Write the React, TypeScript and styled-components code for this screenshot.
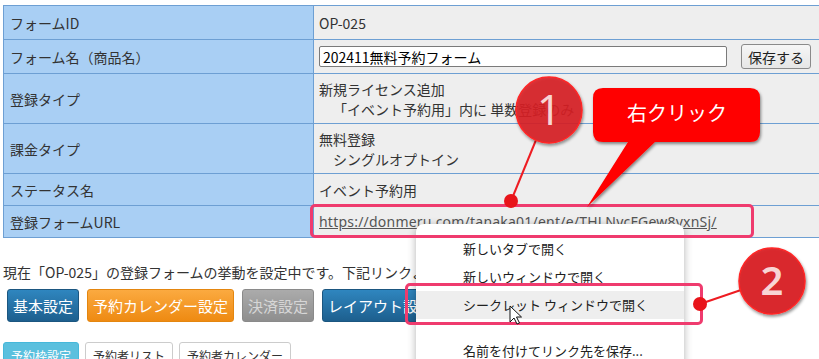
import React from "react";
import styled, { createGlobalStyle, css } from "styled-components";

const GlobalStyle = createGlobalStyle`
  html, body {
    margin: 0;
    padding: 0;
    background: #ffffff;
    overflow: hidden;
  }
  body {
    font-family: "Noto Sans CJK JP", "Noto Sans", sans-serif;
    color: #333333;
  }
`;

const Page = styled.div`
  position: relative;
  width: 819px;
  height: 359px;
  overflow: hidden;
  padding: 5px 0 0 3px;
  box-sizing: border-box;
`;

const FormTable = styled.table`
  border-collapse: collapse;
  width: 840px;
  font-size: 14px;
  line-height: 20px;
`;

const LabelCell = styled.th`
  width: 303px;
  background: #a9cff4;
  border: 1px solid #6d9fd3;
  padding: 0 0 0 6px;
  text-align: left;
  font-weight: normal;
  color: #333;
  vertical-align: middle;
`;

const DataCell = styled.td<{ $h: number }>`
  height: ${(p) => p.$h}px;
  background: #eeeeee;
  border: 1px solid #6d9fd3;
  padding: 0 0 0 5px;
  color: #333;
  vertical-align: middle;
  box-sizing: border-box;
`;

const Indented = styled.div`
  padding-left: 14px;
`;

const NameRow = styled.div`
  display: flex;
  align-items: center;
  gap: 14px;
`;

const NameInput = styled.input`
  width: 408px;
  height: 21px;
  box-sizing: border-box;
  border: 1px solid #7a7a7a;
  border-radius: 2px;
  padding: 0 3px;
  font-family: "Noto Sans CJK JP", sans-serif;
  font-size: 14px;
  color: #000;
  background: #fff;
`;

const SaveButton = styled.button`
  height: 25px;
  width: 70px;
  box-sizing: border-box;
  border: 1px solid #8a8a8a;
  border-radius: 3px;
  background: linear-gradient(#f6f6f6, #e6e6e6);
  font-family: "Noto Sans CJK JP", sans-serif;
  font-size: 14px;
  color: #222;
  padding: 0;
`;

const UrlLink = styled.a`
  color: #555;
  text-decoration: underline;
  font-family: "Noto Sans", "Noto Sans CJK JP", sans-serif;
  font-size: 14px;
  letter-spacing: 0.22px;
`;

const Notice = styled.p`
  margin: 24px 0 7px 0;
  font-size: 14px;
  line-height: 20px;
  color: #333;
  white-space: nowrap;
`;

const ButtonRow = styled.div`
  display: flex;
  gap: 8px;
  padding-left: 4px;
`;

type Variant = "blue" | "orange" | "gray";

const variants: Record<Variant, ReturnType<typeof css>> = {
  blue: css`
    background: linear-gradient(#2f86bf, #1d5f8e);
    border-color: #1b5680;
    color: #fff;
  `,
  orange: css`
    background: linear-gradient(#fbaa40, #ee8a12);
    border-color: #e4860f;
    color: #fff;
  `,
  gray: css`
    background: linear-gradient(#ababab, #8e8e8e);
    border-color: #8a8a8a;
    color: #d6d6d6;
  `,
};

const NavButton = styled.button<{ $variant: Variant }>`
  height: 33px;
  padding: 0 5px;
  border: 1px solid;
  border-radius: 3px;
  font-family: "Noto Sans CJK JP", sans-serif;
  font-size: 15px;
  white-space: nowrap;
  ${(p) => variants[p.$variant]}
`;

const TabRow = styled.div`
  display: flex;
  gap: 6px;
  margin-top: 20px;
`;

const Tab = styled.button<{ $active?: boolean }>`
  height: 26px;
  padding: 0 7px;
  border-radius: 3px;
  font-family: "Noto Sans CJK JP", sans-serif;
  font-size: 12px;
  white-space: nowrap;
  border: 1px solid ${(p) => (p.$active ? "#46b8da" : "#cccccc")};
  background: ${(p) => (p.$active ? "#5bc0de" : "#ffffff")};
  color: ${(p) => (p.$active ? "#ffffff" : "#333333")};
`;

const ContextMenu = styled.div`
  position: absolute;
  left: 416px;
  top: 224px;
  width: 268px;
  height: 150px;
  background: #ffffff;
  border-radius: 8px 8px 0 0;
  box-shadow: 0 2px 8px rgba(0, 0, 0, 0.3);
  padding-top: 11px;
  box-sizing: border-box;
  z-index: 1;
`;

const MenuItem = styled.div<{ $hover?: boolean }>`
  height: 28px;
  line-height: 28px;
  padding-left: 47px;
  font-size: 13px;
  color: #202020;
  background: ${(p) => (p.$hover ? "#eeeeee" : "transparent")};
`;

const MenuGap = styled.div`
  height: 18px;
`;

const Highlight = styled.div<{ $x: number; $y: number; $w: number; $h: number }>`
  position: absolute;
  left: ${(p) => p.$x}px;
  top: ${(p) => p.$y}px;
  width: ${(p) => p.$w}px;
  height: ${(p) => p.$h}px;
  box-sizing: border-box;
  border: 3px solid #ef3b6e;
  border-radius: 5px;
  z-index: 2;
`;

const Annotations = styled.svg`
  position: absolute;
  left: 0;
  top: 0;
  z-index: 3;
  pointer-events: none;
  overflow: visible;
`;

const calloutPath =
  "M603,88 H750 Q760,88 760,98 V132 Q760,142 750,142 H655 L587,207 L628,142 H603 Q593,142 593,132 V98 Q593,88 603,88 Z";

export default function App() {
  return (
    <>
      <GlobalStyle />
      <Page>
        <FormTable>
          <tbody>
            <tr>
              <LabelCell>フォームID</LabelCell>
              <DataCell $h={34}>OP-025</DataCell>
            </tr>
            <tr>
              <LabelCell>フォーム名（商品名）</LabelCell>
              <DataCell $h={34}>
                <NameRow>
                  <NameInput defaultValue="202411無料予約フォーム" />
                  <SaveButton>保存する</SaveButton>
                </NameRow>
              </DataCell>
            </tr>
            <tr>
              <LabelCell>登録タイプ</LabelCell>
              <DataCell $h={50}>
                <div>新規ライセンス追加</div>
                <Indented>「イベント予約用」内に 単数登録のみ</Indented>
              </DataCell>
            </tr>
            <tr>
              <LabelCell>課金タイプ</LabelCell>
              <DataCell $h={50}>
                <div>無料登録</div>
                <Indented>シングルオプトイン</Indented>
              </DataCell>
            </tr>
            <tr>
              <LabelCell>ステータス名</LabelCell>
              <DataCell $h={32}>イベント予約用</DataCell>
            </tr>
            <tr>
              <LabelCell>登録フォームURL</LabelCell>
              <DataCell $h={32}>
                <UrlLink href="#">https://donmeru.com/tanaka01/ent/e/THLNycFGew8yxnSj/</UrlLink>
              </DataCell>
            </tr>
          </tbody>
        </FormTable>

        <Notice>現在「OP-025」の登録フォームの挙動を設定中です。下記リンクより各種設定を行ってください。</Notice>

        <ButtonRow>
          <NavButton $variant="blue">基本設定</NavButton>
          <NavButton $variant="orange">予約カレンダー設定</NavButton>
          <NavButton $variant="gray">決済設定</NavButton>
          <NavButton $variant="blue">レイアウト設定</NavButton>
          <NavButton $variant="blue">メール設定</NavButton>
        </ButtonRow>

        <TabRow>
          <Tab $active>予約枠設定</Tab>
          <Tab>予約者リスト</Tab>
          <Tab>予約者カレンダー</Tab>
        </TabRow>

        <ContextMenu>
          <MenuItem>新しいタブで開く</MenuItem>
          <MenuItem>新しいウィンドウで開く</MenuItem>
          <MenuItem $hover>シークレット ウィンドウで開く</MenuItem>
          <MenuGap />
          <MenuItem>名前を付けてリンク先を保存...</MenuItem>
        </ContextMenu>

        <Highlight $x={310} $y={204} $w={444} $h={34} />
        <Highlight $x={405} $y={283} $w={298} $h={42} />

        <Annotations width={819} height={359} viewBox="0 0 819 359">
          <defs>
            <filter id="shadow" x="-20%" y="-20%" width="140%" height="160%">
              <feDropShadow dx="1" dy="2" stdDeviation="1.5" floodColor="#000" floodOpacity="0.45" />
            </filter>
          </defs>

          {/* cursor */}
          <path
            d="M510,306 L510,322 L514,318 L517,324 L519.5,323 L516.5,317 L521.5,317 Z"
            fill="#ffffff"
            stroke="#111111"
            strokeWidth="1"
            strokeLinejoin="round"
          />

          {/* callout */}
          <path d={calloutPath} fill="#ff0000" filter="url(#shadow)" />
          <text
            x="677"
            y="121"
            textAnchor="middle"
            fill="#ffffff"
            fontSize="20"
            fontFamily="Noto Sans CJK JP, sans-serif"
          >
            右クリック
          </text>

          {/* marker 1 */}
          <line x1="536" y1="140" x2="511" y2="201" stroke="#ee1c22" strokeWidth="2" />
          <circle cx="511" cy="201" r="7" fill="#e8141a" />
          <circle cx="549" cy="110" r="33" fill="rgba(218,28,34,0.88)" stroke="#ff2626" strokeWidth="1.5" filter="url(#shadow)" />
          <text
            x="549"
            y="125"
            textAnchor="middle"
            fill="#f8d5d5"
            fontSize="42"
            fontFamily="Noto Sans, sans-serif"
          >
            1
          </text>

          {/* marker 2 */}
          <line x1="700" y1="304" x2="741" y2="290" stroke="#ee1c22" strokeWidth="2" />
          <circle cx="700" cy="304" r="7" fill="#e8141a" />
          <circle cx="772" cy="281" r="33" fill="rgba(218,28,34,0.92)" stroke="#ff2626" strokeWidth="1.5" filter="url(#shadow)" />
          <text
            x="772"
            y="295"
            textAnchor="middle"
            fill="#f8d5d5"
            fontSize="40"
            fontWeight="600"
            fontFamily="Noto Sans, sans-serif"
          >
            2
          </text>
        </Annotations>
      </Page>
    </>
  );
}
